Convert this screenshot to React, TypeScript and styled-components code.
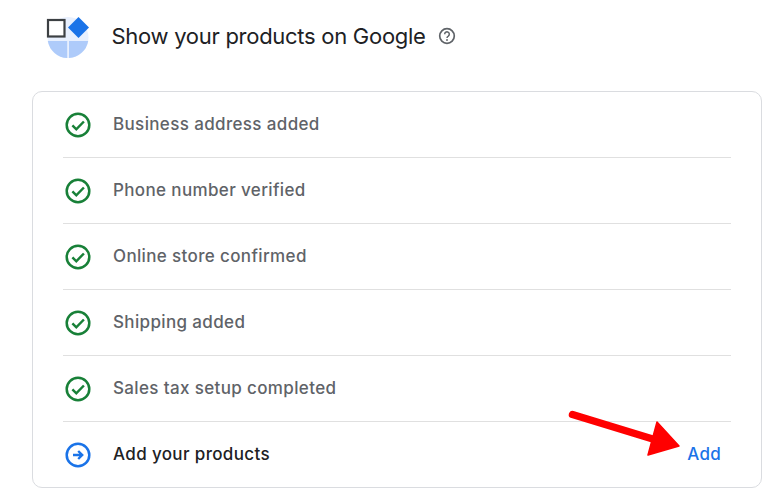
import React from "react";
import styled, { createGlobalStyle } from "styled-components";

const GlobalStyle = createGlobalStyle`
  html, body {
    margin: 0;
    padding: 0;
    background: #ffffff;
  }
  body {
    font-family: "Inter", "Roboto", sans-serif;
  }
`;

const Page = styled.div`
  position: relative;
  width: 784px;
  height: 502px;
  overflow: hidden;
  padding: 15px 22px 0 32px;
  box-sizing: border-box;
`;

const Header = styled.div`
  display: flex;
  align-items: center;
  height: 44px;
  margin-bottom: 32px;
`;

const Logo = styled.svg`
  width: 44px;
  height: 44px;
  margin-left: 14px;
  flex: none;
`;

const Title = styled.h1`
  margin: 0 0 2px 21.5px;
  font-size: 22px;
  font-weight: 400;
  letter-spacing: -0.28px;
  color: #202124;
`;

const HelpIcon = styled.svg`
  width: 18px;
  height: 18px;
  margin: 0 0 2px 12px;
  flex: none;
`;

const Card = styled.div`
  border: 1px solid #dadce0;
  border-radius: 10px;
  padding: 0 30px;
  height: 397px;
  box-sizing: border-box;
`;

const Row = styled.div`
  display: flex;
  align-items: center;
  height: 66px;
  box-sizing: border-box;
  border-bottom: 1px solid #e0e0e0;
  &:last-child {
    border-bottom: none;
  }
`;

const RowIcon = styled.svg`
  width: 26px;
  height: 26px;
  margin-left: 2px;
  flex: none;
`;

const Label = styled.span<{ $active?: boolean }>`
  margin: 0 0 2px 22px;
  font-size: 17px;
  font-weight: 450;
  letter-spacing: 0.36px;
  color: ${(p) => (p.$active ? "#202124" : "#5f6368")};
`;

const AddLink = styled.a`
  margin: 0 10px 2px auto;
  font-size: 17px;
  font-weight: 450;
  letter-spacing: 0.3px;
  color: #1a73e8;
`;

const Arrow = styled.svg`
  position: absolute;
  left: 560px;
  top: 400px;
  width: 130px;
  height: 60px;
`;

const steps = [
  "Business address added",
  "Phone number verified",
  "Online store confirmed",
  "Shipping added",
  "Sales tax setup completed",
];

function CheckIcon() {
  return (
    <RowIcon viewBox="0 0 26 26" fill="none">
      <circle cx="13" cy="13" r="11.3" stroke="#188038" strokeWidth="2.5" />
      <path d="M7.4 13.4l3.9 3.9 7.6-7.8" stroke="#188038" strokeWidth="2.5" />
    </RowIcon>
  );
}

function NextIcon() {
  return (
    <RowIcon viewBox="0 0 26 26" fill="none">
      <circle cx="13" cy="13" r="11.3" stroke="#1a73e8" strokeWidth="2.5" />
      <path d="M8 13h9M13.2 9l4 4-4 4" stroke="#1a73e8" strokeWidth="2.4" />
    </RowIcon>
  );
}

export default function App() {
  return (
    <Page>
      <GlobalStyle />
      <Header>
        <Logo viewBox="0 0 44 44">
          <circle cx="22" cy="22.5" r="20.5" fill="#e8f0fe" />
          <path d="M1.8 26H21.2V43A20.5 20.5 0 0 1 1.8 26Z" fill="#aecbfa" />
          <path d="M23 26H42.2A20.5 20.5 0 0 1 23 43Z" fill="#aecbfa" />
          <rect x="2" y="5" width="16.5" height="16.5" fill="#ffffff" stroke="#3c4043" strokeWidth="2.2" />
          <path d="M32.5 2L43 12.5 32.5 23 22 12.5Z" fill="#1a73e8" />
        </Logo>
        <Title>Show your products on Google</Title>
        <HelpIcon viewBox="0 0 18 18" fill="none">
          <circle cx="9" cy="9" r="7.3" stroke="#5f6368" strokeWidth="1.7" />
          <path d="M6.7 7.2a2.3 2.3 0 1 1 3.6 1.9c-.8.5-1.3 1-1.3 1.9" stroke="#5f6368" strokeWidth="1.5" />
          <circle cx="9" cy="13" r="0.95" fill="#5f6368" />
        </HelpIcon>
      </Header>
      <Card>
        {steps.map((step) => (
          <Row key={step}>
            <CheckIcon />
            <Label>{step}</Label>
          </Row>
        ))}
        <Row>
          <NextIcon />
          <Label $active>Add your products</Label>
          <AddLink>Add</AddLink>
        </Row>
      </Card>
      <Arrow viewBox="0 0 130 60">
        <path d="M12.5 14.5L96 40" stroke="#ff0000" strokeWidth="7.5" strokeLinecap="round" />
        <path d="M97 22L119 46 88 55Z" fill="#ff0000" stroke="#ff0000" strokeWidth="1.5" strokeLinejoin="round" />
      </Arrow>
    </Page>
  );
}
